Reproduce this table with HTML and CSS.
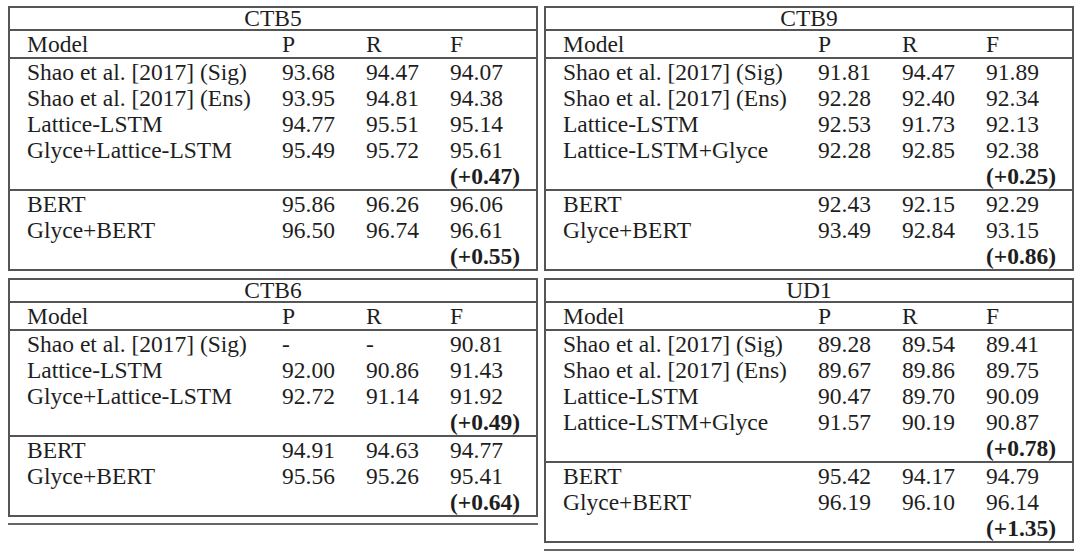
FILE: index.html
```html
<!DOCTYPE html>
<html lang="en">
<head>
    <meta charset="UTF-8">
    <meta name="viewport" content="width=device-width, initial-scale=1.0">
    <title>Results</title>
    <link rel="stylesheet" href="styles.css">
</head>

<body>
    <div class="page">
        <div class="column">
            <table class="results">
                <colgroup><col class="col-model"><col class="col-num"><col class="col-num"><col></colgroup>
                <thead>
                    <tr class="caption-row"><th colspan="4">CTB5</th></tr>
                    <tr class="head-row"><td class="model">Model</td><td>P</td><td>R</td><td>F</td></tr>
                </thead>
                <tbody>
                    <tr><td class="model">Shao et al. [2017] (Sig)</td><td>93.68</td><td>94.47</td><td>94.07</td></tr>
                    <tr><td class="model">Shao et al. [2017] (Ens)</td><td>93.95</td><td>94.81</td><td>94.38</td></tr>
                    <tr><td class="model">Lattice-LSTM</td><td>94.77</td><td>95.51</td><td>95.14</td></tr>
                    <tr><td class="model">Glyce+Lattice-LSTM</td><td>95.49</td><td>95.72</td><td>95.61</td></tr>
                    <tr class="gain-row"><td class="model"></td><td></td><td></td><td class="gain">(+0.47)</td></tr>
                </tbody>
                <tbody class="group">
                    <tr><td class="model">BERT</td><td>95.86</td><td>96.26</td><td>96.06</td></tr>
                    <tr><td class="model">Glyce+BERT</td><td>96.50</td><td>96.74</td><td>96.61</td></tr>
                    <tr class="gain-row"><td class="model"></td><td></td><td></td><td class="gain">(+0.55)</td></tr>
                </tbody>
            </table>

            <table class="results">
                <colgroup><col class="col-model"><col class="col-num"><col class="col-num"><col></colgroup>
                <thead>
                    <tr class="caption-row"><th colspan="4">CTB6</th></tr>
                    <tr class="head-row"><td class="model">Model</td><td>P</td><td>R</td><td>F</td></tr>
                </thead>
                <tbody>
                    <tr><td class="model">Shao et al. [2017] (Sig)</td><td>-</td><td>-</td><td>90.81</td></tr>
                    <tr><td class="model">Lattice-LSTM</td><td>92.00</td><td>90.86</td><td>91.43</td></tr>
                    <tr><td class="model">Glyce+Lattice-LSTM</td><td>92.72</td><td>91.14</td><td>91.92</td></tr>
                    <tr class="gain-row"><td class="model"></td><td></td><td></td><td class="gain">(+0.49)</td></tr>
                </tbody>
                <tbody class="group">
                    <tr><td class="model">BERT</td><td>94.91</td><td>94.63</td><td>94.77</td></tr>
                    <tr><td class="model">Glyce+BERT</td><td>95.56</td><td>95.26</td><td>95.41</td></tr>
                    <tr class="gain-row"><td class="model"></td><td></td><td></td><td class="gain">(+0.64)</td></tr>
                </tbody>
            </table>
            <div class="rule"></div>
        </div>

        <div class="column">
            <table class="results">
                <colgroup><col class="col-model"><col class="col-num"><col class="col-num"><col></colgroup>
                <thead>
                    <tr class="caption-row"><th colspan="4">CTB9</th></tr>
                    <tr class="head-row"><td class="model">Model</td><td>P</td><td>R</td><td>F</td></tr>
                </thead>
                <tbody>
                    <tr><td class="model">Shao et al. [2017] (Sig)</td><td>91.81</td><td>94.47</td><td>91.89</td></tr>
                    <tr><td class="model">Shao et al. [2017] (Ens)</td><td>92.28</td><td>92.40</td><td>92.34</td></tr>
                    <tr><td class="model">Lattice-LSTM</td><td>92.53</td><td>91.73</td><td>92.13</td></tr>
                    <tr><td class="model">Lattice-LSTM+Glyce</td><td>92.28</td><td>92.85</td><td>92.38</td></tr>
                    <tr class="gain-row"><td class="model"></td><td></td><td></td><td class="gain">(+0.25)</td></tr>
                </tbody>
                <tbody class="group">
                    <tr><td class="model">BERT</td><td>92.43</td><td>92.15</td><td>92.29</td></tr>
                    <tr><td class="model">Glyce+BERT</td><td>93.49</td><td>92.84</td><td>93.15</td></tr>
                    <tr class="gain-row"><td class="model"></td><td></td><td></td><td class="gain">(+0.86)</td></tr>
                </tbody>
            </table>

            <table class="results">
                <colgroup><col class="col-model"><col class="col-num"><col class="col-num"><col></colgroup>
                <thead>
                    <tr class="caption-row"><th colspan="4">UD1</th></tr>
                    <tr class="head-row"><td class="model">Model</td><td>P</td><td>R</td><td>F</td></tr>
                </thead>
                <tbody>
                    <tr><td class="model">Shao et al. [2017] (Sig)</td><td>89.28</td><td>89.54</td><td>89.41</td></tr>
                    <tr><td class="model">Shao et al. [2017] (Ens)</td><td>89.67</td><td>89.86</td><td>89.75</td></tr>
                    <tr><td class="model">Lattice-LSTM</td><td>90.47</td><td>89.70</td><td>90.09</td></tr>
                    <tr><td class="model">Lattice-LSTM+Glyce</td><td>91.57</td><td>90.19</td><td>90.87</td></tr>
                    <tr class="gain-row"><td class="model"></td><td></td><td></td><td class="gain">(+0.78)</td></tr>
                </tbody>
                <tbody class="group">
                    <tr><td class="model">BERT</td><td>95.42</td><td>94.17</td><td>94.79</td></tr>
                    <tr><td class="model">Glyce+BERT</td><td>96.19</td><td>96.10</td><td>96.14</td></tr>
                    <tr class="gain-row"><td class="model"></td><td></td><td></td><td class="gain">(+1.35)</td></tr>
                </tbody>
            </table>
            <div class="rule"></div>
        </div>
    </div>
</body>
</html>
```

FILE: styles.css
```css
/* Page */
body, html {
    margin: 0;
    padding: 0;
    background: #ffffff;
    color: #1e1e1e;
    font-family: "Liberation Serif", Tinos, "Times New Roman", "DejaVu Serif", serif;
}

.page {
    display: grid;
    grid-template-columns: 530px 530px;
    column-gap: 6px;
    padding: 6px 6px 0 8px;
}

.column {
    display: flex;
    flex-direction: column;
    gap: 7px;
}

/* Results tables */
.results {
    width: 100%;
    border-collapse: collapse;
    border: 2px solid #555;
    font-family: "Liberation Serif", Tinos, "Times New Roman", "DejaVu Serif", serif;
    font-size: 23.5px;
    table-layout: fixed;
}

.col-model { width: 273px; }
.col-num { width: 84px; }

.results td,
.results th {
    padding: 0;
    height: 26px;
    line-height: 26px;
    text-align: left;
    white-space: nowrap;
    vertical-align: middle;
}

.results td.model {
    padding-left: 17px;
}

.caption-row th {
    height: 21px;
    line-height: 21px;
    font-weight: normal;
    text-align: center;
    border-bottom: 2px solid #555;
}

.head-row td {
    height: 26px;
    border-bottom: 2px solid #555;
}

.gain-row td {
    height: 23px;
}

.group {
    border-top: 2px solid #555;
}

.gain {
    font-weight: bold;
}

/* Closing rule under each column */
.rule {
    border-top: 2px solid #666;
    margin-top: -1px;
}
```
